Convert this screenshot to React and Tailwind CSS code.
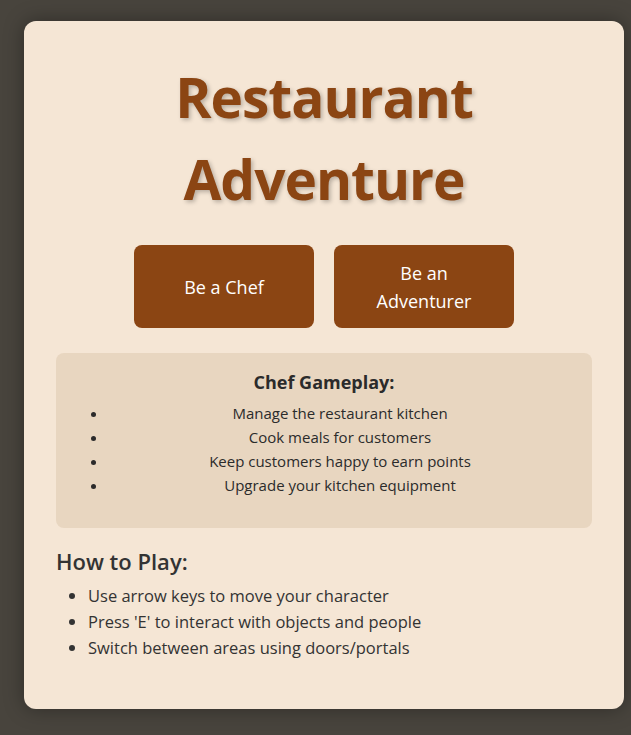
const CHEF_POINTS = [
  "Manage the restaurant kitchen",
  "Cook meals for customers",
  "Keep customers happy to earn points",
  "Upgrade your kitchen equipment",
];

const HOW_TO = [
  "Use arrow keys to move your character",
  "Press 'E' to interact with objects and people",
  "Switch between areas using doors/portals",
];

const font = { fontFamily: '"Open Sans", "Noto Sans", sans-serif' };

export default function App() {
  return (
    <div className="min-h-[735px] bg-[#48443d] pt-[21px] pb-6" style={font}>
      <div className="ml-6 w-[600px] rounded-xl bg-[#f5e6d5] p-8 text-[#333] shadow-[0_0_20px_rgba(0,0,0,0.35)]">
        <h1 className="mt-[3px] text-center text-[55px] leading-[82px] font-bold tracking-[-1px] text-[#8b4513] [text-shadow:2px_2px_4px_rgba(0,0,0,0.25)]">
          Restaurant
          <br />
          Adventure
        </h1>

        <div className="mt-[25px] flex justify-center gap-5">
          <button className="h-[83px] w-[180px] rounded-lg bg-[#8b4513] px-8 text-[18px] leading-[28px] text-white">
            Be a Chef
          </button>
          <button className="h-[83px] w-[180px] rounded-lg bg-[#8b4513] px-8 text-[18px] leading-[28px] text-white">
            Be an Adventurer
          </button>
        </div>

        <div className="mt-[25px] rounded-lg bg-[#e8d6c0] px-5 pt-4 pb-[31px] text-center">
          <h3 className="text-[18px] leading-[26px] font-bold text-[#2b2b2b]">Chef Gameplay:</h3>
          <ul className="mt-[6px] list-disc pl-8 text-[15px] leading-[24px] text-[#2b2b2b]">
            {CHEF_POINTS.map((p) => (
              <li key={p}>{p}</li>
            ))}
          </ul>
        </div>

        <h3 className="mt-[18px] text-[22px] leading-[30px] font-semibold text-[#333]">How to Play:</h3>
        <ul className="mt-[7px] mb-4 list-disc pl-8 text-[16.5px] leading-[26px] text-[#333]">
          {HOW_TO.map((p) => (
            <li key={p}>{p}</li>
          ))}
        </ul>
      </div>
    </div>
  );
}
